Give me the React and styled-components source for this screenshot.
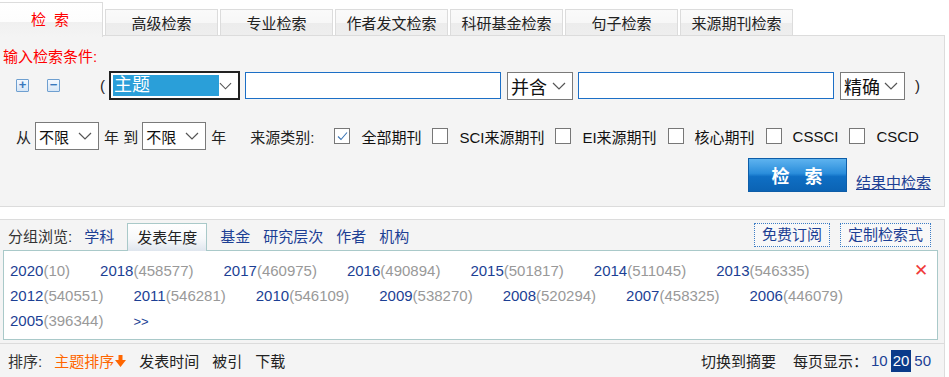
import styled, { createGlobalStyle } from "styled-components";

const GlobalStyle = createGlobalStyle`
  body {
    margin: 0;
    background: #fff;
    font-family: "Liberation Sans", "Noto Sans CJK SC", sans-serif;
    font-size: 15px;
    color: #222;
  }
`;

const tabs = ["高级检索", "专业检索", "作者发文检索", "科研基金检索", "句子检索", "来源期刊检索"];
const sources = ["SCI来源期刊", "EI来源期刊", "核心期刊", "CSSCI", "CSCD"];
const years = [
  ["2020", "10"], ["2018", "458577"], ["2017", "460975"], ["2016", "490894"],
  ["2015", "501817"], ["2014", "511045"], ["2013", "546335"], ["2012", "540551"],
  ["2011", "546281"], ["2010", "546109"], ["2009", "538270"], ["2008", "520294"],
  ["2007", "458325"], ["2006", "446079"], ["2005", "396344"],
];

function Chevron() {
  return (
    <svg width="14" height="8" viewBox="0 0 14 8">
      <path d="M1 1 L7 7 L13 1" fill="none" stroke="#555" strokeWidth="1.2" />
    </svg>
  );
}

function Select({ value, width, focused, small }) {
  return (
    <SelectBox $width={width} $focused={focused} $small={small}>
      <SelectText $focused={focused}>{value}</SelectText>
      <Chevron />
    </SelectBox>
  );
}

function CheckOption({ label, checked }) {
  return (
    <Option>
      <Check>
        {checked && (
          <svg width="13" height="13" viewBox="0 0 13 13">
            <path d="M2 6.5 L5 9.5 L11 2.5" fill="none" stroke="#3b74b4" strokeWidth="1.1" />
          </svg>
        )}
      </Check>
      <span>{label}</span>
    </Option>
  );
}

export default function App() {
  return (
    <Page>
      <GlobalStyle />
      <TabRow>
        <Tab $active>检 索</Tab>
        {tabs.map((t) => (
          <Tab key={t}>{t}</Tab>
        ))}
      </TabRow>
      <Panel>
        <Hint>输入检索条件:</Hint>
        <Row>
          <IconBtn>+</IconBtn>
          <IconBtn $gap>−</IconBtn>
          <Paren>(</Paren>
          <Select value="主题" width={131} focused />
          <TextInput />
          <Select value="并含" width={66} />
          <TextInput />
          <Select value="精确" width={65} />
          <Paren $right>)</Paren>
        </Row>
        <FilterRow>
          <Word>从</Word>
          <Select value="不限" width={64} small />
          <Word>年 到</Word>
          <Select value="不限" width={64} small />
          <Word>年</Word>
          <SourceLabel>来源类别:</SourceLabel>
          <CheckOption label="全部期刊" checked />
          {sources.map((s) => (
            <CheckOption key={s} label={s} />
          ))}
        </FilterRow>
        <ActionRow>
          <SearchButton>检 索</SearchButton>
          <ResultLink>结果中检索</ResultLink>
        </ActionRow>
      </Panel>
      <Lower>
        <GroupRow>
          <GroupLabel>分组浏览:</GroupLabel>
          <GroupLink>学科</GroupLink>
          <GroupTab>发表年度</GroupTab>
          <GroupLink>基金</GroupLink>
          <GroupLink>研究层次</GroupLink>
          <GroupLink>作者</GroupLink>
          <GroupLink>机构</GroupLink>
          <Spacer />
          <DotButton>免费订阅</DotButton>
          <DotButton>定制检索式</DotButton>
        </GroupRow>
        <YearBox>
          <Close>✕</Close>
          <YearList>
            {years.map(([y, n]) => (
              <YearItem key={y}>
                <YearLink>{y}</YearLink>
                <Count>({n})</Count>
              </YearItem>
            ))}
            <YearItem>
              <YearLink $small>&gt;&gt;</YearLink>
            </YearItem>
          </YearList>
        </YearBox>
        <SortRow>
          <SortLabel>排序:</SortLabel>
          <SortItem $active>
            主题排序
            <svg width="11" height="12" viewBox="0 0 11 12">
              <path d="M3.5 0 H7.5 V5 H11 L5.5 12 L0 5 H3.5 Z" fill="#ff6600" />
            </svg>
          </SortItem>
          <SortItem>发表时间</SortItem>
          <SortItem>被引</SortItem>
          <SortItem>下载</SortItem>
          <Spacer />
          <SortItem>切换到摘要</SortItem>
          <PerPage>每页显示：</PerPage>
          <PageNum>10</PageNum>
          <PageNum $active>20</PageNum>
          <PageNum>50</PageNum>
        </SortRow>
      </Lower>
    </Page>
  );
}

const Page = styled.div`
  width: 949px;
  height: 377px;
  overflow: hidden;
  white-space: nowrap;
`;

const TabRow = styled.div`
  display: flex;
  align-items: flex-end;
  gap: 2px;
  height: 36px;
  position: relative;
  z-index: 1;
`;

const Tab = styled.div`
  box-sizing: border-box;
  width: ${(p) => (p.$active ? "103px" : "113px")};
  height: ${(p) => (p.$active ? "35px" : "27px")};
  display: flex;
  align-items: center;
  justify-content: center;
  border: 1px solid #dcdcdc;
  border-left: ${(p) => (p.$active ? "none" : "1px solid #dcdcdc")};
  border-bottom: ${(p) => (p.$active ? "none" : "1px solid #dcdcdc")};
  background: ${(p) =>
    p.$active
      ? "linear-gradient(#ffffff 0%, #fdfdfd 55%, #f0f0f0 56%, #f4f4f4 100%)"
      : "linear-gradient(#fafafa 0%, #f7f7f7 50%, #ececec 51%, #eeeeee 100%)"};
  color: ${(p) => (p.$active ? "#f00" : "#222")};
  letter-spacing: ${(p) => (p.$active ? "2px" : "0")};
  padding-bottom: ${(p) => (p.$active ? "4px" : "0")};
  margin-bottom: ${(p) => (p.$active ? "-1px" : "0")};
  font-size: 15px;
`;

const Panel = styled.div`
  box-sizing: border-box;
  width: 945px;
  height: 172px;
  margin-top: -1px;
  border: 1px solid #dcdcdc;
  border-left: none;
  background: #f4f4f4;
  padding: 11px 13px 0 0;
`;

const Hint = styled.div`
  color: #f00;
  font-size: 15px;
  line-height: 20px;
  padding-left: 3px;
`;

const Row = styled.div`
  display: flex;
  align-items: center;
  height: 29px;
  margin-top: 4px;
`;

const IconBtn = styled.div`
  box-sizing: border-box;
  width: 13px;
  height: 13px;
  margin-left: ${(p) => (p.$gap ? "18px" : "16px")};
  border: 1px solid #6e9fd0;
  border-radius: 1px;
  background: linear-gradient(#f4f9ff, #d6e6f6);
  color: #3a78bd;
  font-size: 13px;
  font-weight: bold;
  line-height: 10px;
  text-align: center;
`;

const Paren = styled.span`
  margin-left: ${(p) => (p.$right ? "5px" : "40px")};
  margin-right: ${(p) => (p.$right ? "0" : "4px")};
  font-size: 15px;
`;

const SelectBox = styled.div`
  box-sizing: border-box;
  flex: 0 0 auto;
  width: ${(p) => p.$width}px;
  height: ${(p) => (p.$focused ? "29px" : "28px")};
  display: flex;
  align-items: center;
  justify-content: space-between;
  padding: 0 6px 0 2px;
  border: ${(p) => (p.$focused ? "2px solid #222" : "1px solid #7a7a7a")};
  background: #fff;
  margin-right: 5px;
  font-size: ${(p) => (p.$small ? "15px" : "18px")};
`;

const SelectText = styled.span`
  flex: ${(p) => (p.$focused ? "0 0 105px" : "0 0 auto")};
  height: ${(p) => (p.$focused ? "21px" : "auto")};
  line-height: ${(p) => (p.$focused ? "21px" : "normal")};
  background: ${(p) => (p.$focused ? "#2a9fd9" : "transparent")};
  color: ${(p) => (p.$focused ? "#fff" : "#111")};
  padding-left: 1px;
`;

const TextInput = styled.div`
  box-sizing: border-box;
  width: 256px;
  height: 27px;
  border: 1px solid #1c6fc6;
  background: #fff;
  margin-right: 6px;
`;

const FilterRow = styled.div`
  display: flex;
  align-items: center;
  height: 28px;
  margin-top: 22px;
  padding-left: 16px;
`;

const Word = styled.span`
  flex: 0 0 auto;
  margin-right: 4px;
`;

const SourceLabel = styled.span`
  margin-left: 20px;
  margin-right: 20px;
`;

const Option = styled.label`
  display: flex;
  align-items: center;
  margin-right: 11px;
  color: #111;
`;

const Check = styled.span`
  box-sizing: border-box;
  width: 16px;
  height: 16px;
  border: 1px solid #777;
  background: #fff;
  display: flex;
  align-items: center;
  justify-content: center;
  margin-right: 11px;
`;

const ActionRow = styled.div`
  display: flex;
  justify-content: flex-end;
  align-items: flex-end;
  margin-top: 8px;
`;

const SearchButton = styled.div`
  box-sizing: border-box;
  width: 99px;
  height: 34px;
  border: 1px solid #0d5da8;
  background: linear-gradient(#5eb3ef 0%, #2a8ddb 45%, #0f6fc4 55%, #0b63b4 100%);
  color: #fff;
  font-weight: bold;
  font-size: 18px;
  letter-spacing: 5px;
  display: flex;
  align-items: center;
  justify-content: center;
  padding-left: 4px;
`;

const ResultLink = styled.a`
  margin-left: 9px;
  color: #1c3f94;
  text-decoration: underline;
  line-height: 20px;
  margin-bottom: -1px;
`;

const Lower = styled.div`
  box-sizing: border-box;
  width: 945px;
  margin-top: 12px;
  border-top: 1px solid #dcdcdc;
  border-right: 1px solid #dcdcdc;
  background: #f4f4f4;
  height: 160px;
`;

const GroupRow = styled.div`
  display: flex;
  align-items: flex-end;
  height: 30px;
  padding: 0 13px 0 8px;
`;

const GroupLabel = styled.span`
  color: #333;
  line-height: 26px;
  margin-right: 12px;
`;

const GroupLink = styled.a`
  color: #1c3f94;
  line-height: 26px;
  margin-right: 13px;
`;

const GroupTab = styled.span`
  box-sizing: border-box;
  height: 28px;
  line-height: 27px;
  padding: 0 9px;
  margin-right: 13px;
  border: 1px solid #a9c9c9;
  border-bottom: none;
  background: linear-gradient(#ffffff 0%, #f6f8fa 55%, #dfe6ee 100%);
  color: #222;
  margin-bottom: -1px;
  position: relative;
  z-index: 1;
`;

const Spacer = styled.div`
  flex: 1;
`;

const DotButton = styled.span`
  box-sizing: border-box;
  height: 24px;
  line-height: 22px;
  padding: 0 7px;
  margin: 0 0 3px 10px;
  border: 1px dotted #3d7cc4;
  color: #1c3f94;
  background: #f8f8f8;
`;

const YearBox = styled.div`
  box-sizing: border-box;
  position: relative;
  width: 935px;
  height: 90px;
  margin-left: 3px;
  border: 1px solid #a9c9c9;
  background: #fff;
  padding: 7px 40px 0 6px;
`;

const Close = styled.span`
  position: absolute;
  right: 9px;
  top: 9px;
  color: #f03a3a;
  font-size: 17px;
`;

const YearList = styled.div`
  display: flex;
  flex-wrap: wrap;
  line-height: 25px;
`;

const YearItem = styled.span`
  margin-right: 30px;
`;

const YearLink = styled.a`
  color: #1c3f94;
  font-size: ${(p) => (p.$small ? "13px" : "15px")};
`;

const Count = styled.span`
  color: #999;
`;

const SortRow = styled.div`
  display: flex;
  align-items: center;
  height: 33px;
  margin-top: 3px;
  border-top: 1px solid #dcdcdc;
  padding: 0 11px 0 8px;
`;

const SortLabel = styled.span`
  color: #333;
  margin-right: 12px;
`;

const SortItem = styled.a`
  color: ${(p) => (p.$active ? "#ff6600" : "#222")};
  margin-right: 13px;
  display: flex;
  align-items: center;
  gap: 1px;
`;

const PerPage = styled.span`
  color: #222;
  margin-left: 4px;
  margin-right: 0;
`;

const PageNum = styled.span`
  padding: 0 2px;
  height: 22px;
  line-height: 22px;
  margin-left: 1px;
  background: ${(p) => (p.$active ? "#0a3b8a" : "transparent")};
  color: ${(p) => (p.$active ? "#fff" : "#1c3f94")};
`;
